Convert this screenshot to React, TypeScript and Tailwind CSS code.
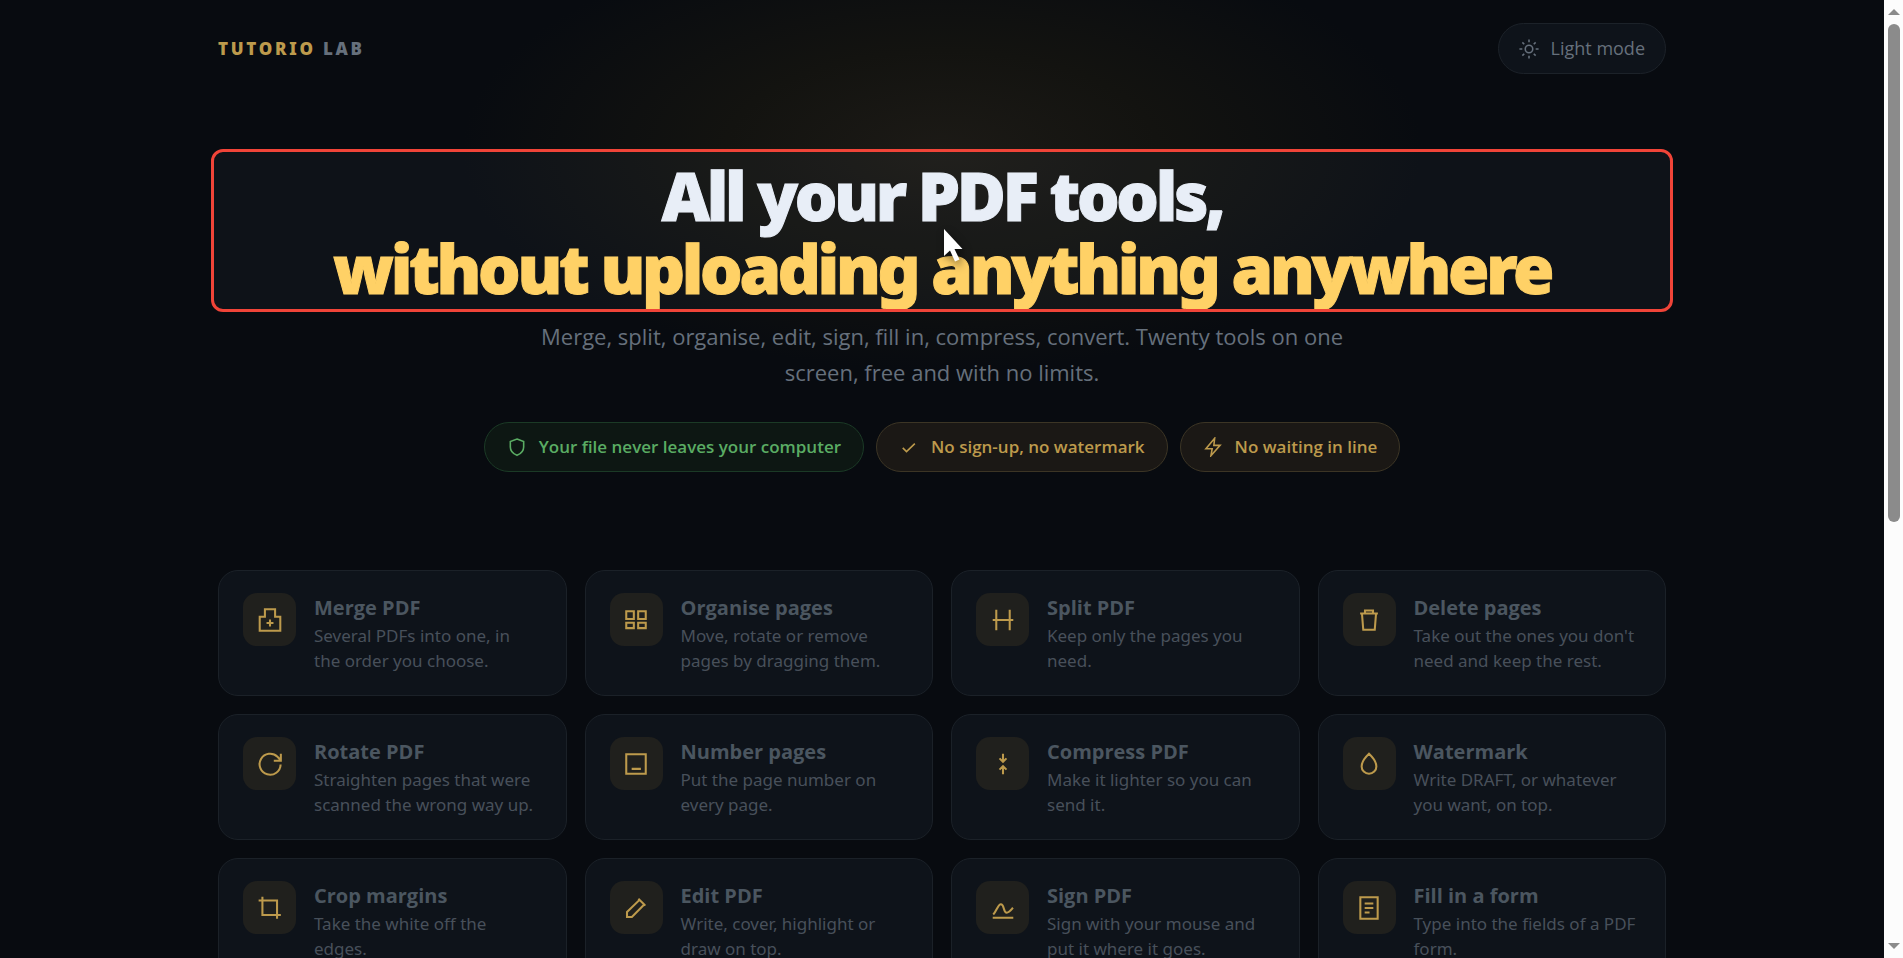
import type { ReactNode } from "react";

type Tool = { title: string; text: string; icon: ReactNode };

function Icon({ size, children }: { size: number; children: ReactNode }) {
  return (
    <svg
      width={size}
      height={size}
      viewBox="0 0 24 24"
      fill="none"
      stroke="currentColor"
      strokeWidth="1.9"
      aria-hidden="true"
      className="shrink-0"
    >
      {children}
    </svg>
  );
}

const tools: Tool[] = [
  {
    title: "Merge PDF",
    text: "Several PDFs into one, in the order you choose.",
    icon: <path d="M2.500 9h4.800V2h9.400v7h4.800V22h-19zM12 11.500v6.500M8.800 14.800h6.400" />,
  },
  {
    title: "Organise pages",
    text: "Move, rotate or remove pages by dragging them.",
    icon: <path d="M3 4h7v7H3zM14 4h7v7h-7zM3 14.500h7v5H3zM14 14.500h7v5h-7z" />,
  },
  {
    title: "Split PDF",
    text: "Keep only the pages you need.",
    icon: <path d="M5.800 2.500v19M18.200 2.500v19M2.500 12h19" />,
  },
  {
    title: "Delete pages",
    text: "Take out the ones you don't need and keep the rest.",
    icon: <path d="M3.800 6h16.400M8.300 6V3.200h7.400V6M5.500 6l1.200 15h10.600l1.200-15" />,
  },
  {
    title: "Rotate PDF",
    text: "Straighten pages that were scanned the wrong way up.",
    icon: <path d="M21.800 12.500a9.700 9.700 0 1 1-2.900-7.200L22 8.700M22 2.500v6.500h-6.500" />,
  },
  {
    title: "Number pages",
    text: "Put the page number on every page.",
    icon: <path d="M3 3h18v18H3zM8 16.500h8.500" />,
  },
  {
    title: "Compress PDF",
    text: "Make it lighter so you can send it.",
    icon: <path d="M12 2.500v7.500M8.800 6.800l3.200 3.200 3.200-3.200M12 21.500V14M8.800 17.200l3.200-3.200 3.200 3.200" />,
  },
  {
    title: "Watermark",
    text: "Write DRAFT, or whatever you want, on top.",
    icon: <path d="M12 2.500s6.800 6.500 6.800 11.700a6.800 6.800 0 0 1-13.600 0C5.200 9 12 2.500 12 2.500z" />,
  },
  {
    title: "Crop margins",
    text: "Take the white off the edges.",
    icon: <path d="M5 1.500v17h17M1.500 5h17v17" />,
  },
  {
    title: "Edit PDF",
    text: "Write, cover, highlight or draw on top.",
    icon: <path d="M3.700 20.300v-4.600L15.300 4.500l4.300 4.300L8.200 20.300zM14.200 3.400l6.400 6.400" />,
  },
  {
    title: "Sign PDF",
    text: "Sign with your mouse and put it where it goes.",
    icon: <path d="M3 18c3-3 4.500-9.500 7-9.500 3.500 0 2 7.800 5.500 7.800 2 0 3.500-2 5.700-4.500M2.500 21h19" />,
  },
  {
    title: "Fill in a form",
    text: "Type into the fields of a PDF form.",
    icon: <path d="M4 2h16v20H4zM8 7.800h8M8 12h8M8 16.200h4.500" />,
  },
];

const badges = [
  {
    label: "Your file never leaves your computer",
    tone: "border-[#1b3a26] bg-[#0d1713] text-[#5aac63]",
    icon: <path d="M12 2.500l8 3v6.500c0 4.500-3 8-8 10-5-2-8-5.500-8-10V5.500z" />,
  },
  {
    label: "No sign-up, no watermark",
    tone: "border-[#3c3525] bg-[#1b1815] text-[#bd9a4c]",
    icon: <path d="M4.500 13l4.500 4.500L19 8" />,
  },
  {
    label: "No waiting in line",
    tone: "border-[#3c3525] bg-[#1b1815] text-[#bd9a4c]",
    icon: <path d="M14 1.500L3.500 14H11l-1.500 8.500L20.500 10H13z" />,
  },
];

function Badge({ label, tone, icon }: (typeof badges)[number]) {
  return (
    <li className={`flex h-[50px] items-center gap-3 rounded-full border px-[22px] text-[17px] font-semibold ${tone}`}>
      <Icon size={20}>{icon}</Icon>
      {label}
    </li>
  );
}

function ToolCard({ title, text, icon }: Tool) {
  return (
    <a
      href="#"
      className="flex h-full min-h-[126px] items-start gap-[18px] rounded-[20px] border border-[#1b2128] bg-[#0e131a] py-[22px] pr-7 pl-6"
    >
      <span className="flex size-[53px] shrink-0 items-center justify-center rounded-[14px] bg-[#20201d] text-[#bd9a4c]">
        <Icon size={26}>{icon}</Icon>
      </span>
      <span className="flex flex-col">
        <strong className="text-[20px] leading-[30px] font-bold text-[#4b5660]">{title}</strong>
        <span className="font-['Noto_Sans',sans-serif] text-[17px] leading-[25px] text-[#48505a]">{text}</span>
      </span>
    </a>
  );
}

function Scrollbar() {
  return (
    <div className="flex w-[19px] shrink-0 flex-col items-center justify-between bg-[#fcfcfc] py-[9px]" aria-hidden="true">
      <div className="flex flex-col items-center gap-[9px]">
        <svg width="12" height="6" viewBox="0 0 12 6" fill="#8b8b8b">
          <path d="M0 6L6 0l6 6z" />
        </svg>
        <div className="h-[52vh] w-3 rounded-full bg-[#8b8b8b]" />
      </div>
      <svg width="12" height="6" viewBox="0 0 12 6" fill="#8b8b8b">
        <path d="M0 0l6 6 6-6z" />
      </svg>
    </div>
  );
}

export default function App() {
  return (
    <div className="flex h-screen overflow-hidden bg-[#080b10] font-['Open_Sans','Noto_Sans',sans-serif]">
      <div className="min-w-0 flex-1 overflow-hidden bg-[radial-gradient(ellipse_480px_220px_at_50%_150px,#1c1a16_0%,#131310_45%,#080b10_100%)]">
        <div className="mx-auto max-w-[1448px]">
          <header className="flex items-center justify-between pt-[23px]">
            <a href="#" className="font-['Noto_Sans',sans-serif] text-[17px] font-black tracking-[0.16em] text-[#bd9a4c]">
              TUTORIO <span className="text-[#66707c]">LAB</span>
            </a>
            <button
              type="button"
              className="flex h-[51px] items-center gap-3 rounded-full border border-[#1c2229] bg-[#0e131a] px-5 text-[18px] text-[#66707c]"
            >
              <Icon size={20}>
                <circle cx="12" cy="12" r="4.500" />
                <path d="M12 0.500v3.500M12 20v3.500M0.500 12H4M20 12h3.500M4 4l2.300 2.300M17.700 17.700L20 20M4 20l2.300-2.300M17.700 6.300L20 4" />
              </Icon>
              Light mode
            </button>
          </header>

          <main>
            <section className="flex flex-col items-center text-center">
              <div className="relative mt-[75px] w-full px-[7px]">
                <h1 className="-mx-[14px] h-[163px] overflow-hidden rounded-xl border-[3px] border-[#f04438] bg-[#8296b4]/5 pt-[7px] font-['Noto_Sans',sans-serif] text-[67px] leading-[73px] font-black tracking-tighter text-[#e8eef7] [-webkit-text-stroke:1px_currentColor]">
                  All your PDF tools,
                  <br />
                  <span className="text-[#ffd166]">without uploading anything anywhere</span>
                </h1>
                <svg
                  className="absolute top-[79px] left-1/2 drop-shadow-[2px_4px_4px_rgba(0,0,0,0.6)]"
                  width="22"
                  height="36"
                  viewBox="0 0 22 36"
                  fill="#ffffff"
                  aria-hidden="true"
                >
                  <path d="M2 1v27l6-5.500 5 11 4.500-2-5-10.500h8z" />
                </svg>
              </div>
              <p className="mt-[6px] max-w-[820px] text-[22px] leading-9 text-[#66707c]">
                Merge, split, organise, edit, sign, fill in, compress, convert. Twenty tools on one screen, free and with
                no limits.
              </p>
              <ul className="mt-8 flex flex-wrap justify-center gap-3">
                {badges.map((badge) => (
                  <Badge key={badge.label} {...badge} />
                ))}
              </ul>
            </section>

            <ul className="mt-[98px] grid grid-cols-4 gap-[18px]">
              {tools.map((tool) => (
                <li key={tool.title}>
                  <ToolCard {...tool} />
                </li>
              ))}
            </ul>
          </main>
        </div>
      </div>
      <Scrollbar />
    </div>
  );
}
